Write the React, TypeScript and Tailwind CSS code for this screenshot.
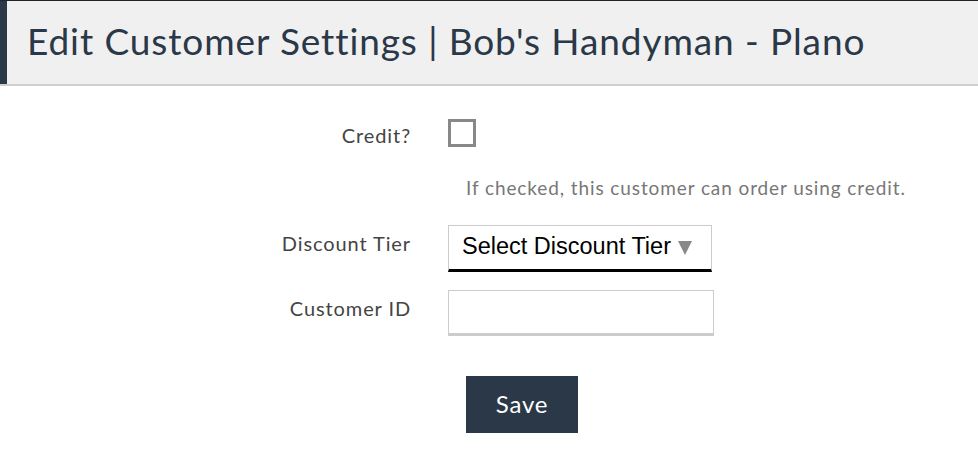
import React from 'react';

const labelFont = { fontFamily: 'Lato, "Noto Sans", sans-serif' };

export default function App() {
  return (
    <div className="min-h-[476px] bg-white" style={labelFont}>
      {/* page header */}
      <div className="flex h-[86px] border-t border-[#222] border-b-2 border-b-[#cfcfcf] bg-[#f0f0f0]">
        <div className="w-[7px] bg-[#2a3848]" />
        <h1 className="flex items-center pl-[20px] pb-[3px] text-[37px] font-normal tracking-[0.9px] text-[#2a3848]">
          Edit Customer Settings | Bob's Handyman - Plano
        </h1>
      </div>

      {/* form */}
      <div className="grid grid-cols-[411px_1fr] gap-x-[37px] pt-[33px]">
        <label className="pt-[1px] text-right text-[20px] tracking-[0.9px] text-[#444]">Credit?</label>
        <div>
          <div className="h-[28px] w-[28px] border-[3px] border-[#888] bg-white" />
          <p className="mt-[27px] pl-[18px] text-[19px] tracking-[0.9px] text-[#777]">
            If checked, this customer can order using credit.
          </p>
        </div>

        <label className="pt-[3px] mt-[22px] text-right text-[20px] tracking-[0.9px] text-[#444]">Discount Tier</label>
        <div className="mt-[22px]">
          <div
            className="flex h-[47px] w-[264px] items-center border border-b-[3px] border-[#ccc] border-b-black pl-[13px] text-[23.5px] text-black"
            style={{ fontFamily: '"Liberation Sans", Arial, sans-serif' }}
          >
            <span>Select Discount Tier</span>
            <svg className="ml-[7px] mt-[1px]" width="14" height="14" viewBox="0 0 14 14">
              <path d="M0 0 H14 L7 14 Z" fill="#888" />
            </svg>
          </div>
        </div>

        <label className="pt-[3px] mt-[18px] text-right text-[20px] tracking-[0.9px] text-[#444]">Customer ID</label>
        <div className="mt-[18px]">
          <div className="h-[46px] w-[266px] border border-b-[3px] border-[#ccc] bg-white" />
        </div>

        <div />
        <div className="mt-[40px] pl-[18px]">
          <button className="h-[57px] w-[112px] bg-[#2a3848] text-[24px] tracking-[0.8px] text-white">Save</button>
        </div>
      </div>
    </div>
  );
}
